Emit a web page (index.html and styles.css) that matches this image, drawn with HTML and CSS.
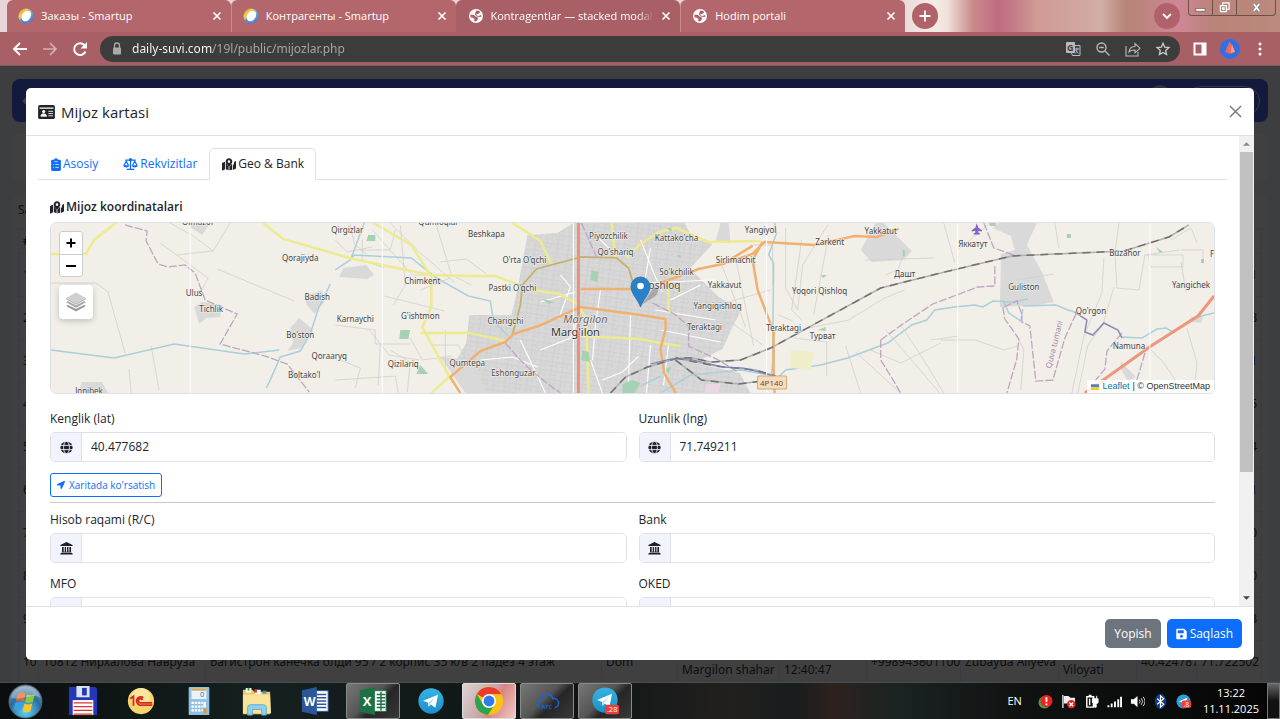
FILE: index.html
```html
<!DOCTYPE html>
<html lang="uz">
<head>
<meta charset="utf-8">
<title>Hodim portali</title>
<link rel="stylesheet" href="styles.css">
</head>
<body>
<svg class="defs" aria-hidden="true">
  <defs>
    <linearGradient id="ring" x1="0" y1="0" x2="1" y2="1"><stop offset="0" stop-color="#e8662c"/><stop offset=".3" stop-color="#f2d04a"/><stop offset=".55" stop-color="#5cb8d8"/><stop offset="1" stop-color="#5a4fc0"/></linearGradient>
    <radialGradient id="orb" cx=".5" cy=".8" r=".8"><stop offset="0" stop-color="#5fd6f5"/><stop offset=".6" stop-color="#2a6c9c"/><stop offset="1" stop-color="#8fa8b8"/></radialGradient>
    <linearGradient id="tg" x1="0" y1="0" x2="0" y2="1"><stop offset="0" stop-color="#37b4e4"/><stop offset="1" stop-color="#1b8fc9"/></linearGradient>
  </defs>
  <symbol id="smartup" viewBox="0 0 16 16"><circle cx="8" cy="8" r="7.6" fill="url(#ring)"/><path d="M2 12l3 3 4 .6-5-5z" fill="#3f7fe0"/><ellipse cx="8.3" cy="7.8" rx="4.2" ry="5.8" fill="#fff" transform="rotate(35 8 8)"/></symbol>
  <symbol id="world" viewBox="0 0 16 16"><circle cx="8" cy="8" r="7" fill="#fff"/><path d="M2.500 6.500l3.500.5 2 2h1.500l.5 2-2 2.500-2-.5.500-2-2-1.500H2.500zM8 2.500l3.500.5.500 1.500L10 6 8.500 6l0 1.500 2 .5 2.500-1 .5 1.500-1.500.5-3.500-.5-1.500-2z" fill="#a9606a"/></symbol>
  <symbol id="cross" viewBox="0 0 10 10"><path d="M1.500 1.500l7 7m0-7l-7 7" stroke="currentColor" stroke-width="1.700"/></symbol>
  <symbol id="globe" viewBox="0 0 16 16"><circle cx="8" cy="8" r="7.500" fill="#1c2126"/><g fill="none" stroke="#f1f4fd" stroke-width="1.100"><ellipse cx="8" cy="8" rx="3.600" ry="7.600"/><path d="M0 5.400h16M0 10.600h16"/></g></symbol>
  <symbol id="bank" viewBox="0 0 16 16"><path d="M8 0l7.500 3.600V5H.5V3.600zM2.500 6h2v6h1.300V6h1.700v6h1.200V6h1.700v6h1.200V6h2v6.200l1 .8H1.500l1-.8zM1 13.500h14l.8 2H.2z" fill="#1c2126"/></symbol>
  <symbol id="mapdot" viewBox="0 0 18 16"><path d="M0 6.200L4 4.600V14.200L0 16zM5 4.800c.4 2 2.400 4.600 3.500 6v4.700L5 14.200zM18 3.500v9.700L14 15V9.200c1-1.400 1.600-2.700 1.800-4.800zM9.500 15.500v-4.600c1.200-1.300 2-2.300 2.700-3.600l.8.7V14.800z" fill="currentColor"/><path fill-rule="evenodd" d="M9 0c2.500 0 4.300 1.900 4.300 4.200C13.300 6.200 10.500 9.600 9 11.300 7.500 9.600 4.700 6.200 4.700 4.200 4.700 1.900 6.500 0 9 0zm0 2.600a1.700 1.700 0 1 0 0 3.400 1.700 1.700 0 0 0 0-3.400z" fill="currentColor"/></symbol>
  <symbol id="clip" viewBox="0 0 12 16"><path fill="currentColor" d="M1.500 2H3.600a2.500 2.500 0 0 1 4.800 0H10.500c.8 0 1.500.7 1.500 1.500v11c0 .8-.7 1.500-1.500 1.500h-9C.7 16 0 15.300 0 14.500v-11C0 2.700.7 2 1.500 2z"/><path d="M4 4.500h4M2.500 8h1M5 8h4.500M2.500 11.500h1M5 11.500h4.500" stroke="#fff" stroke-width=".9"/></symbol>
  <symbol id="scale" viewBox="0 0 20 16"><g fill="none" stroke="currentColor" stroke-width="1.700"><path d="M3 2.800h14M10 1v13.800M5 15.100h10M1.200 10L4.300 4.300 7.400 10M12.600 10l3.100-5.700L18.800 10"/></g><circle cx="10" cy="2.200" r="2.200" fill="currentColor"/><path d="M.3 9.500h8c-.3 4-7.700 4-8 0zM11.700 9.500h8c-.3 4-7.700 4-8 0z" fill="currentColor"/></symbol>
  <symbol id="telegram" viewBox="0 0 28 28"><circle cx="14" cy="14" r="13.500" fill="url(#tg)"/><path d="M5.500 13.800L21.500 7.300 18.700 21.300 13.800 17.600 11.300 20 10.600 15.700z" fill="#fff"/><path d="M11 16l8-6.500-6 7.300-1.600 3z" fill="#b5d8ea"/></symbol>
</svg>

<header class="browser">
  <div class="tabstrip">
    <div class="tabs">
      <div class="tab"><svg class="fav"><use href="#smartup"/></svg><span>Заказы - Smartup</span><button aria-label="Close"><svg><use href="#cross"/></svg></button></div>
      <div class="tab"><svg class="fav"><use href="#smartup"/></svg><span>Контрагенты - Smartup</span><button aria-label="Close"><svg><use href="#cross"/></svg></button></div>
      <div class="tab current"><svg class="fav"><use href="#world"/></svg><span class="fade">Kontragentlar — stacked modal (</span><button aria-label="Close"><svg><use href="#cross"/></svg></button></div>
      <div class="tab"><svg class="fav"><use href="#world"/></svg><span>Hodim portali</span><button aria-label="Close"><svg><use href="#cross"/></svg></button></div>
    </div>
    <button class="round" aria-label="New tab"><svg viewBox="0 0 12 12"><path d="M6 0.500v11M.5 6h11" stroke="#fff" stroke-width="1.800"/></svg></button>
    <button class="round search" aria-label="Search tabs"><svg viewBox="0 0 12 12"><path d="M2 4l4 4 4-4" stroke="#fff" stroke-width="1.800" fill="none"/></svg></button>
    <div class="winctl">
      <button aria-label="Minimize"><svg viewBox="0 0 12 12"><rect x="1" y="7" width="10" height="3" fill="#fff" stroke="#555" stroke-width=".7"/></svg></button>
      <button aria-label="Restore"><svg viewBox="0 0 12 12"><path d="M4 3.500V1h7v7H8.500M1.500 4h6.500v6.500H1.500zM4 6.500h1.500v1.500H4z" fill="none" stroke="#fff" stroke-width="1.300"/></svg></button>
      <button class="wide" aria-label="Close window"><svg viewBox="0 0 12 12"><path d="M3 2l6 8m0-8l-6 8" stroke="#666" stroke-width="3.300"/><path d="M3 2l6 8m0-8l-6 8" stroke="#fff" stroke-width="2"/></svg></button>
    </div>
  </div>
  <div class="toolbar">
    <nav class="history">
      <button aria-label="Back"><svg viewBox="0 0 16 16"><path d="M15 8H2M8 2L2 8l6 6" fill="none" stroke="#fff" stroke-width="1.900"/></svg></button>
      <button class="dim" aria-label="Forward"><svg viewBox="0 0 16 16"><path d="M1 8h13M8 2l6 6-6 6" fill="none" stroke="#fff" stroke-width="1.700"/></svg></button>
      <button aria-label="Reload"><svg viewBox="0 0 16 16"><path d="M13.500 10.500A5.900 5.900 0 1 1 12.500 4.300" fill="none" stroke="#fff" stroke-width="2"/><path d="M15 1v6.500H8.500z" fill="#fff"/></svg></button>
    </nav>
    <div class="omnibox">
      <svg class="lock" viewBox="0 0 10 14"><path d="M2.500 6V3.500a2.500 2.500 0 0 1 5 0V6" fill="none" stroke="#aaa" stroke-width="1.300"/><rect x="1" y="5.500" width="8" height="7" rx="1" fill="#aaa"/></svg>
      <input type="text" aria-label="Address" value="daily-suvi.com/19l/public/mijozlar.php">
      <button aria-label="Translate"><svg viewBox="0 0 16 16"><rect x="1" y="1" width="9" height="11" rx="1" fill="#bbb"/><path d="M10 4.500h5v10H7.500L6.500 12" fill="none" stroke="#bbb"/><text x="2" y="10" font-size="9" font-weight="700" fill="#3c3c3c">G</text><path d="M9.500 8h5M12 6.500V8c0 2-1 3.500-2 4.500M10.500 9l3 3.500" stroke="#bbb" fill="none"/></svg></button>
      <button aria-label="Zoom"><svg viewBox="0 0 16 16"><circle cx="6.500" cy="6.500" r="4.500" fill="none" stroke="#bbb" stroke-width="1.400"/><path d="M10 10l4.500 4.500M4.300 6.500h4.500" stroke="#bbb" stroke-width="1.400"/></svg></button>
      <button aria-label="Share"><svg viewBox="0 0 16 16"><path d="M1 5v10h12v-4M4 11c.5-4 3-5.500 6-5.500V2.500l5 4.700-5 4.600V9c-2.500 0-4.500.3-6 2z" fill="none" stroke="#bbb" stroke-width="1.100"/></svg></button>
      <button aria-label="Bookmark"><svg viewBox="0 0 16 16"><path d="M8 2.300l1.700 3.900 4.200.4-3.200 2.800.9 4.100L8 11.400l-3.600 2.100.9-4.100-3.200-2.800 4.200-.4z" fill="none" stroke="#ccc" stroke-width="1.300"/></svg></button>
    </div>
    <button aria-label="Side panel"><svg viewBox="0 0 16 16"><path fill-rule="evenodd" d="M1.500 1.500h13v13h-13zM3.500 3.500v9H9.500v-9z" fill="#fff"/></svg></button>
    <button class="avatar" aria-label="Profile"><svg viewBox="0 0 20 20"><circle cx="10" cy="10" r="10" fill="#2f6fe8"/><path d="M9.500 2.500l3 4 2.500 6.500-4 2-6-2z" fill="#f0685c"/><path d="M12 6l3 7-4.500.5z" fill="#f9a08c"/></svg></button>
    <button aria-label="Menu"><svg viewBox="0 0 16 16" fill="#fff"><circle cx="8" cy="3" r="1.500"/><circle cx="8" cy="8" r="1.500"/><circle cx="8" cy="13" r="1.500"/></svg></button>
  </div>
</header>

<main class="viewport">
  <div class="behind">
    <div class="navbar"><svg viewBox="0 0 16 20"><path d="M12 3L5 10l7 7" fill="none" stroke="#3c404c" stroke-width="4"/></svg><div class="user"><b></b><i></i></div></div>
    <div class="filters"></div>
    <div class="list">
      <p>Sana</p>
      <table>
        <colgroup><col class="c1"><col class="c2"><col class="c3"><col class="c4"><col class="c5"><col class="c6"><col class="c7"><col class="c8"><col class="c9"><col class="c10"><col class="c11"></colgroup>
        <tr class="head"><th>#</th><th colspan="10"></th></tr>
        <tr><td>1</td><td colspan="10" class="end">1</td></tr>
        <tr><td>2</td><td colspan="10" class="end">8</td></tr>
        <tr><td>3</td><td colspan="10" class="end">1</td></tr>
        <tr><td>4</td><td colspan="10" class="end">5</td></tr>
        <tr><td>5</td><td colspan="10" class="end">4</td></tr>
        <tr><td>6</td><td colspan="10" class="end">1</td></tr>
        <tr><td>7</td><td colspan="10" class="end">0</td></tr>
        <tr><td>8</td><td colspan="10" class="end">0</td></tr>
        <tr><td>9</td><td colspan="10" class="end">3</td></tr>
        <tr><td>10</td><td>10812 Нирхалова Наврӯза</td><td>Багистрон канечка олди 95 / 2 корпис 35 к/в 2 падез 4 этаж</td><td>Dom</td><td><br>Margilon shahar</td><td><br>12:40:47</td><td>+998943801100</td><td>Zubayda Aliyeva</td><td><br>Viloyati</td><td>40.424787</td><td>71.722502</td></tr>
      </table>
    </div>
  </div>

  <section class="modal" role="dialog" aria-labelledby="title">
    <div class="modal-head">
      <svg class="idcard" viewBox="0 0 18 15"><rect width="18" height="15" rx="2" fill="#212529"/><path d="M1.500 3.300h15" stroke="#fff" stroke-width="1.300"/><circle cx="6" cy="7" r="1.700" fill="#fff"/><path d="M3 12c0-3.500 6-3.500 6 0zM11 6.800h5M11 9.200h5M11 11.600h5" fill="#fff" stroke="#fff" stroke-width=".9"/></svg>
      <h1 id="title">Mijoz kartasi</h1>
      <button class="close" aria-label="Close"><svg viewBox="0 0 14 14"><path d="M1 1l12 12M13 1L1 13" stroke="#7c7c7c" stroke-width="1.600"/></svg></button>
    </div>
    <div class="modal-body">
      <div class="content">
        <div class="nav" role="tablist">
          <button role="tab"><svg class="i-clip"><use href="#clip"/></svg>Asosiy</button>
          <button role="tab"><svg class="i-scale"><use href="#scale"/></svg>Rekvizitlar</button>
          <button role="tab" class="active" aria-selected="true"><svg class="i-map"><use href="#mapdot"/></svg>Geo &amp; Bank</button>
        </div>
        <div class="pane">
          <h2><svg class="i-map"><use href="#mapdot"/></svg>Mijoz koordinatalari</h2>
          <div class="map">
            <svg class="tiles" viewBox="51 223 1162 170" preserveAspectRatio="xMidYMid slice">
              <defs>
                <pattern id="streets" width="11" height="9" patternUnits="userSpaceOnUse" patternTransform="rotate(8)"><rect width="11" height="9" fill="#d9d8d8"/><path d="M0 2.500h11M3 0v9M7.500 2.500V9M0 6.500h7" stroke="#cecece" stroke-width=".7" fill="none"/></pattern>
              </defs>
              <rect x="51" y="223" width="1162" height="170" fill="#f2efe9"/>
              <path d="M527 235l30-2 16-10h111l8 15 20 6-23 25 9 8 20 20 23 12-10 20-9 20-28 14 45 10 12 22H487l-8-12-26-18 13-22 3-28h42l7-30z" fill="url(#streets)"/>
              <g fill="#dad9d9">
                <path d="M875 223h8l28 28-8 9-32 2-11-12zM1000 254l14-4-4-14-18-8 6-5 38 0-10 22 15 27 12 30-16 3-38 2 1-42zM194 307l8-5 20 3-2 12-14 1-7 6zM188 223h22l-8 12-12-8zM305 296l17-6 2 12-10 12-8-10zM290 328l9-10 14 12-12 18-14 3 6-8zM82 382h20l6 11H78zM343 268l23-3 8 10-7 4-28-2zM1120 362l15 15-8 4-8-14z"/>
                <path d="M440 357l35 3 10 33h-20zM1190 317l12 0-2 6-9-1zM720 223l8 0 2 20-15-2z"/>
              </g>
              <g fill="none" stroke="#d2cfcd" stroke-width=".8">
                <path d="M51 283h45l12 9 17 61M129 369l2 24M170 223l23 13 20 15-36 4M213 251l17-28M217 269l77 32M151 346l8 44M160 243l48 35-8 15M350 224l4 20 12 10M362 240v20l22 8M372 230l40 45 20 0M390 223l30 30 35 30M400 225l5 60-12 20M436 225l15 50 20 10M335 240l12 12 25-5M360 250h30l5-20M440 262l26-3 20 15M384 296l60 15M420 290l30-12M369 330l20 25 30 5M430 345l28 0 8 14M335 380l60-4 3 17M380 345l-2 40M390 350l20 12-3 30M410 338l12 22 30-4M445 330l0 40M335 325l40 5 0 14 35 0M340 360l20 8-5 20"/>
                <path d="M720 262l25 65M735 258l18 88M700 340l30-18 32 23M700 310l70-20M785 228v60l12 22 5-45 25-40M801 240l-10 70 10 10M828 235l-15 80M808 328l40-8 36-22 20-8M793 338l33 4 0 34M845 346l15 47M855 352l45 41M870 350l30 13 40-20M900 325l20 30 23 38M885 330l60 70M930 340l28-4M865 260l68-2M943 223l11 40M885 275l12-5 8-20M750 245h22v40M778 315l14 6"/>
                <path d="M957 250l30-25M1058 248l-4-25M1016 280l37-6M1103 258l-2 35-18 43-12 57M1118 223l-4 30 2 35 22 2 6-35 35-5M1180 250h22v12M1180 262l5 30M1020 390l3-40-8-16M940 340l35 0 28 10 14-4M1150 350l12 12 22 32M1186 328l10 35-3 30M1113 287l-11 38-15 20-10 48M1170 240l20-12 6 15M1147 255h35v12h-32z"/>
              </g>
              <g fill="none" stroke="#fff" stroke-width="1.100">
                <path d="M640 240l14 35 8 17M655 310l60 10M560 275l10 12-12 32M540 302l35-10M595 235l20 20M600 290l-5 35-3 35M630 315l-2 70M650 248l-6 35 70-3M540 350l30-12 10-25M480 360l32-3 25 10M590 360l12 33M650 345l-4 48M670 300l30-15M520 340l25 53M602 380l20-8 16-16M660 330l60 12M668 345l-5 40"/>
              </g>
              <g fill="none" stroke="#a9cfdb" stroke-width="1.500">
                <path d="M364 223l-12 32-2 5M335 270l15-10 4-5 57 3 25 20 32 18 22 5 3 20 15 15M330 284l-12 25-8 25-10 17-20 6-10 23-4 8M51 350l63 8 60-14 70 10 35-4M774 223l2 10-8 22 5 8-1 100-2 20M775 380l10-10 35-5 27-7 40-15 24-18 15-5 8-10 20-3 20-2 8 2 10-6 20 1 15-3M1022 306l33-1 12 5 10 3M1121 337l20 1 15-9 9-1 7 4 20-14 21-5M660 393l30-18 50-5 35 6M1002 300l6 13 12 8 2-12M640 386l20-10"/>
              </g>
              <g fill="none" stroke="#eceb8e" stroke-width="2.500">
                <path d="M51 254h35l8-14 23-18M263 223l20 16 70 20 77 16 40 1 25 0 37 14 27 4 18 10 9 15 2 75M373 223l38 22 20 32 0 30-9 20 30 55 M420 333h50l35 8M452 374l-21 19M512 223l28 18 12 25M611 223l4 34M638 246l-12 12M638 246l20-14 18-4 20 9 12 5 52-1M668 280v34M580 336l60 3 20 4 20 3"/>
              </g>
              <g fill="none" stroke="#c8b06e" stroke-width="1.800"><path d="M512 335l8-30 2-20 14-16 45-12 35 1 12 10 5 16"/></g>
              <g fill="none" stroke="#f0b070" stroke-width="2.500">
                <path d="M460 393l-10-16 30-26 25-9 8-8 25-8 42-19 60 8 25 4v10l-5 20 4 25 12 20M580 289h52M660 283l38-14 24-5 30-10 12-12 50 3 40-9 22 1 22-8M762 242l-10 18 5 30 16 42 0 40 1 22M722 264l30-18"/>
              </g>
              <path d="M578 223v170" stroke="#ef8f77" stroke-width="3"/>
              <path d="M1084 393l66-47 47-30 16-20" fill="none" stroke="#ef967f" stroke-width="3"/>
              <g fill="none" stroke="#bfa5c2" stroke-width="1.300" stroke-dasharray="8 2">
                <path d="M125 225l22 6-1 10 12 23 10 3 17-2 10 8 10 27 32 14-17 30 45 12 22 8 22 28M581 223l8 18 8 18M652 303l22 11 14 12 0 20 28 13 20 12M880 340l22-16 30-20 45-17 17-1 0-20M880 340v20l10 16 10 17M983 223l10 25 22 8M1002 307l2 12 14 20-2 20-10 34M1003 307l13-6 5 13 0 8 8 4 6 55 17-1 12-42 12-26M1121 333l-15 18-2 18-10 12-2 12M1144 353l-12 40M505 343l12 14 10 10 18 15 15 11"/>
              </g>
              <path d="M1074 312l12 8-2 12 8 3 11-12 14 7 4 8" fill="none" stroke="#8e88b5" stroke-width="1.500"/>
              <g fill="none" stroke="#b0b0b0" stroke-width="1.500">
                <path d="M610 393l15-16 22-10 30-9 15 0 18 4 30-2 30-12 110-60 60-15 71-17 112-5 45-14 20-12"/><path d="M675 360l26 20 37 4 30-4M675 358l40 8 40 4 20 6"/>
              </g>
              <g fill="none" stroke="#707070" stroke-width="1.500" stroke-dasharray="8 6">
                <path d="M610 393l15-16 22-10 30-9 15 0 18 4 30-2 30-12 110-60 60-15 71-17 112-5 45-14 20-12"/><path d="M675 360l26 20 37 4 30-4M675 358l40 8 40 4 20 6"/>
              </g>
              <path d="M650 364l20-5 18 0 35 8 20 1 30 8" stroke="#747fba" fill="none" stroke-width="1"/>
              <g fill="#a4d2b2"><path d="M368 235h7v6h-9zM400 330h10l-2 9h-9zM420 365l8 9h-12zM591 270l7 2-1 10-7-2zM582 350l6 2 2 10-9-2zM622 384l10-4 8 3-6 10h-12zM542 299l12 3-6 2zM665 369l6-3-3 8zM820 275h6l-3 3zM817 330l8-3v4zM988 223h7v3h-6zM1066 234h4v4h-4zM1155 247l7 5-3 1zM1200 259h3v4h-3zM676 255h4v4zM902 250h2v6h-2zM666 228h5v4z"/></g>
              <path d="M790 350l23 2-3 18-20-2z" fill="#eeefc8"/><path d="M706 384h14l-2 9h-14z" fill="#edd6e4"/>
              <path d="M190 223v170M382 223v170M573 223v170M766 223v170M957 223v170M1149 223v170" stroke="#fff" stroke-width="1"/>
              <path d="M976 225l1 3 4 3-4-1v3l2 1h-6l2-1v-3l-4 1 4-3z" fill="#8461c4" stroke="#8461c4"/>
              <g class="place">
                <text x="198" y="225">Olmazor</text><text x="347" y="233">Qirgizlar</text><text x="300" y="261">Qorajiyda</text><text x="194" y="296">Ulus</text><text x="211" y="312">Tichlik</text><text x="317" y="300">Badish</text><text x="300" y="338">Bo'ston</text><text x="329" y="359">Qoraaryq</text><text x="304" y="378">Boltako'l</text><text x="89" y="394">Jonibek</text>
                <text x="438" y="225">Qumloqlar</text><text x="486" y="237">Beshkapa</text><text x="422" y="284">Chimkent</text><text x="355" y="322">Karnaychi</text><text x="420" y="319">G'ishtmon</text><text x="403" y="367">Qizilariq</text><text x="467" y="366">Qumtepa</text><text x="524" y="263">O'rta O'qchi</text><text x="512" y="291">Pastki O'qchi</text><text x="505" y="324">Charigchi</text><text x="513" y="376">Eshonguzar</text>
                <text x="608" y="239">Piyozchilik</text><text x="615" y="255">Qo'shariq</text><text x="676" y="241">Kattako'cha</text><text x="760" y="233">Yangiyol</text><text x="735" y="263">Sirlimachit</text><text x="676" y="275">So'kchilik</text><text x="724" y="288">Yakkavut</text><text x="717" y="309">Yangiqishloq</text><text x="704" y="330">Teraktagi</text><text x="783" y="331">Teraktagi</text><text x="829" y="245">Zarkent</text><text x="880" y="234">Yakkatut</text><text x="904" y="277">Дашт</text><text x="819" y="294">Yoqori Qishloq</text><text x="822" y="339">Турват</text>
                <text x="972" y="247">Яккатут</text><text x="1023" y="290">Guliston</text><text x="1124" y="256">Buzahor</text><text x="1190" y="288">Yangichek</text><text x="1090" y="314">Qo'rgon</text><text x="1128" y="349">Namuna</text><text x="1211" y="257">F</text>
                <text x="575" y="336" class="city">Marg'ilon</text><text x="585" y="323" class="city soft">Margilon</text><text x="664" y="289" class="town">oshloq</text>
                <text class="border" x="1056" y="345" transform="rotate(-76 1056 345)">Quva tumani</text>
              </g>
              <rect x="757" y="376" width="29" height="13" rx="1" fill="#f8dcba" stroke="#c9a981"/><text class="shield" x="771" y="386">4P140</text>
              <path d="M641 305l12-17c6-2 6 3 2 8z" fill="#555" opacity=".35"/>
              <path d="M640 307c-2-7-9.500-13-9.500-20.500a9.500 9.500 0 0 1 19 0C649.500 294 642 300 640 307z" fill="#2a81cb" stroke="#2e6fa6" stroke-width=".8"/><circle cx="640" cy="286" r="3.300" fill="#fff"/>
            </svg>
            <div class="zoomctl"><button aria-label="Zoom in"><svg viewBox="0 0 12 12"><path d="M6 1.500v9M1.500 6h9" stroke="#000" stroke-width="2"/></svg></button><button aria-label="Zoom out"><svg viewBox="0 0 12 12"><path d="M1 6h10" stroke="#000" stroke-width="2"/></svg></button></div>
            <button class="layers" aria-label="Layers"><svg viewBox="0 0 20 20"><path d="M0 14l2-1 8 4 8-4 2 1-10 5.500z" fill="#999"/><path d="M0 10.200l2-1 8 4 8-4 2 1-10 5.500z" fill="#aaa"/><path d="M10 .5l10 5.500-10 5.500L0 6z" fill="#d0d0d0"/><path d="M0 6l10 5.500L20 6v1.200L10 12.700 0 7.200z" fill="#b5b5b5"/></svg></button>
            <div class="attrib"><svg viewBox="0 0 12 8"><path fill="#4c7be1" d="M0 0h12v4H0z"/><path fill="#ffd500" d="M0 4h12v3H0z"/><path fill="#e0bc00" d="M0 7h12v1H0z"/></svg><a href="#leaflet">Leaflet</a> | © OpenStreetMap</div>
          </div>
          <div class="grid coords">
            <div class="field"><label for="lat">Kenglik (lat)</label><div class="group"><span><svg><use href="#globe"/></svg></span><input id="lat" type="text" value="40.477682"></div></div>
            <div class="field"><label for="lng">Uzunlik (lng)</label><div class="group"><span><svg><use href="#globe"/></svg></span><input id="lng" type="text" value="71.749211"></div></div>
          </div>
          <button class="show"><svg viewBox="0 0 512 512"><path fill="currentColor" d="M444.520 3.520L28.740 195.420c-47.970 22.390-31.980 92.750 19.190 92.750h175.910v175.910c0 51.170 70.360 67.170 92.750 19.190l191.900-415.780c15.990-38.390-25.590-79.970-63.970-63.970z"/></svg>Xaritada ko'rsatish</button>
          <hr>
          <div class="grid">
            <div class="field"><label for="acc">Hisob raqami (R/C)</label><div class="group"><span><svg><use href="#bank"/></svg></span><input id="acc" type="text"></div></div>
            <div class="field"><label for="bankname">Bank</label><div class="group"><span><svg><use href="#bank"/></svg></span><input id="bankname" type="text"></div></div>
            <div class="field"><label for="mfo">MFO</label><div class="group"><span></span><input id="mfo" type="text"></div></div>
            <div class="field"><label for="oked">OKED</label><div class="group"><span></span><input id="oked" type="text"></div></div>
          </div>
        </div>
      </div>
      <div class="scrollbar" aria-hidden="true"><svg viewBox="0 0 8 4"><path d="M0 4l4-4 4 4z" fill="#888"/></svg><div class="track"><div class="thumb"></div></div><svg viewBox="0 0 8 4"><path d="M0 0l4 4 4-4z" fill="#444"/></svg></div>
    </div>
    <div class="modal-foot">
      <button class="btn grey">Yopish</button>
      <button class="btn blue"><svg viewBox="0 0 448 512"><path fill="currentColor" d="M433.941 129.941l-83.882-83.882A48 48 0 0 0 316.118 32H48C21.490 32 0 53.490 0 80v352c0 26.510 21.490 48 48 48h352c26.510 0 48-21.490 48-48V163.882a48 48 0 0 0-14.059-33.941zM224 416c-35.346 0-64-28.654-64-64 0-35.346 28.654-64 64-64s64 28.654 64 64c0 35.346-28.654 64-64 64zm96-304.520V212c0 6.627-5.373 12-12 12H76c-6.627 0-12-5.373-12-12V108c0-6.627 5.373-12 12-12h228.520c3.183 0 6.235 1.264 8.485 3.515l3.480 3.480A11.996 11.996 0 0 1 320 111.480z"/></svg>Saqlash</button>
    </div>
  </section>
</main>

<footer class="taskbar">
  <button class="start" aria-label="Start"><svg viewBox="0 0 36 36"><circle cx="18" cy="18" r="17" fill="url(#orb)" stroke="#54616a"/><path d="M10 10c3-2 5-1.500 8 0l-2 8c-3-1.500-5-1.500-8 0z" fill="#e8622c"/><path d="M19.500 10.500c3 1.500 5 1.500 8 0l-2 8c-3 1.500-5 1.500-8 0z" fill="#8cc63e"/><path d="M7.500 19.500c3-1.500 5-1.500 8 0l-2 7.500c-3-1.500-5-1.500-8 0z" fill="#3aa0e0"/><path d="M17 20c3 1.500 5 1.500 8 0l-2 8c-3 1.500-5 1.500-8 0z" fill="#fbc52c"/><path d="M3 14A15.500 15.500 0 0 1 33 14C24 9 12 18 3 14z" fill="#fff" opacity=".3"/></svg></button>
  <button aria-label="Total Commander"><svg viewBox="0 0 32 32"><path d="M1 1h28l2 2v28H1z" fill="#2437b8"/><rect x="9" y="0" width="14" height="12" fill="#dfe3ea"/><rect x="15" y="2" width="5" height="8" fill="#2437b8"/><path d="M5 15h22v16H5z" fill="#fff"/><path d="M6 18h20M6 22h20M6 26h20M6 30h20" stroke="#d33" stroke-width="1.500"/></svg></button>
  <button aria-label="1C"><svg viewBox="0 0 32 32"><circle cx="16" cy="16" r="14" fill="#f7d56a"/><circle cx="16" cy="12" r="10" fill="#fbe79c"/><path d="M4.500 13.500l3.500-2.500v10M18.500 12.500a4.500 4.500 0 1 0-2 8H28M17.500 15a2.200 2.200 0 1 0-2 3H28" fill="none" stroke="#d8261c" stroke-width="1.900"/></svg></button>
  <button aria-label="Calculator"><svg viewBox="0 0 32 32"><rect x="5" y="1" width="22" height="30" rx="1" fill="#8fc0e4"/><rect x="8" y="3" width="16" height="11" fill="#e8f4fb"/><path d="M8 4h16" stroke="#f0a040" stroke-width="2"/><text x="17" y="12" font-size="8" fill="#3573a8">0</text><path d="M8 18h12M8 22h12M8 26h12" stroke="#fff" stroke-width="2.500" stroke-dasharray="2.500 1"/><path d="M22 17v6" stroke="#fff" stroke-width="2.500"/><path d="M22.500 24v5" stroke="#f09020" stroke-width="3"/></svg></button>
  <button aria-label="Explorer"><svg viewBox="0 0 32 32"><path d="M1 4h10l2 2h17v24H1z" fill="#e8c765"/><path d="M4 2h6v5H4zM14 4h6v5h-6z" fill="#fff"/><path d="M6 2h2v3H6z" fill="#3a3"/><path d="M13 4h3v3h-3z" fill="#d33"/><path d="M22 5h4v3h-4z" fill="#48c"/><path d="M1 9h29l1 20H1z" fill="#f8e39a"/><path d="M6 31v-8q0-3 3-3h14q3 0 3 3v8h-5v-6H11v6z" fill="#8fd0ec" stroke="#63a9cd"/></svg></button>
  <button aria-label="Word"><svg viewBox="0 0 32 32"><rect x="14" y="5" width="16" height="22" fill="#fff" stroke="#2b579a"/><path d="M18 9h10M18 12.500h10M18 16h10M18 19.500h10M18 23h10" stroke="#2b579a" stroke-width="1.500"/><path d="M2 4.500L18 1v30L2 27.500z" fill="#2b579a"/><text x="4" y="21" font-size="13" font-weight="700" fill="#fff">W</text></svg></button>
  <button class="open" aria-label="Excel"><svg viewBox="0 0 32 32"><rect x="14" y="5" width="16" height="22" fill="#fff" stroke="#1e7145"/><path d="M20 9h9M20 12.500h9M20 16h9M20 19.500h9M20 23h9M24.500 6v20" stroke="#1e7145" stroke-width="1.500"/><path d="M2 4.500L18 1v30L2 27.500z" fill="#1e7145"/><text x="5" y="21" font-size="14" font-weight="700" fill="#fff">X</text></svg></button>
  <button aria-label="Telegram"><svg viewBox="0 0 32 32"><use href="#telegram" x="2" y="2" width="28" height="28"/></svg></button>
  <button class="open front" aria-label="Chrome"><svg viewBox="0 0 32 32"><circle cx="16" cy="16" r="15" fill="#fbc116"/><path d="M16 16L3 8.500A15 15 0 0 1 29 8.500H16z" fill="#ea3a2b"/><path d="M3 8.500A15 15 0 0 0 15 31L22 19.500 16 16 9.500 19.500z" fill="#2da350"/><circle cx="16" cy="16" r="7.500" fill="#fff"/><circle cx="16" cy="16" r="5.800" fill="#2f7de9"/></svg></button>
  <button class="open" aria-label="ATC"><svg viewBox="0 0 32 32"><path d="M9 23a4.500 4.500 0 0 1 0-8.500 7 7 0 0 1 13.500-1 4.800 4.800 0 0 1 2 9.500" fill="none" stroke="#1864d8" stroke-width="1.700"/><text x="10" y="25" font-size="6" font-weight="700" fill="#1864d8">ATC</text></svg></button>
  <button class="open" aria-label="Telegram, 28"><svg viewBox="0 0 32 32"><use href="#telegram" x="2" y="1" width="28" height="28"/><rect x="16" y="20" width="15" height="10" rx="2" fill="#ee3b3b"/><text x="18" y="28" font-size="8" fill="#fff">.28</text></svg></button>
  <div class="tray">
    <span class="lang">EN</span>
    <svg viewBox="0 0 16 16"><circle cx="7" cy="9" r="6.500" fill="#37a646"/><circle cx="9" cy="7.500" r="6.500" fill="#e22"/><path d="M9 3.500v5M9 10v2" stroke="#fff" stroke-width="2"/></svg>
    <svg viewBox="0 0 16 16"><path d="M2 1v14" stroke="#ddd" stroke-width="1.500"/><path d="M3 2h5l2 2h5v6H3z" fill="#eee"/><circle cx="11" cy="11" r="4.500" fill="#d22"/><path d="M9 9l4 4m0-4l-4 4" stroke="#fff" stroke-width="1.500"/></svg>
    <svg viewBox="0 0 16 16"><path d="M3 3h7v11H3zM5 1.500h3M6 5v7" fill="none" stroke="#fff" stroke-width="1.500"/><path d="M9 5h6v4l-2 2v3h-2v-3L9 9zM10.500 2v3M13.500 2v3" fill="#fff" stroke="#fff"/></svg>
    <svg viewBox="0 0 16 16"><path d="M1.500 14v-2M5 14v-4M8.500 14V8M12 14V5.500M15 14V3" stroke="#fff" stroke-width="2"/></svg>
    <svg viewBox="0 0 16 16"><path d="M1 5.500h3L8 2v12l-4-3.500H1z" fill="#fff"/><path d="M10 6q1.500 2 0 4M12 4.500q3 3.500 0 7M14 3q4 5 0 10" stroke="#ddd" fill="none"/></svg>
    <svg viewBox="0 0 16 16"><ellipse cx="8" cy="8" rx="6" ry="8" fill="#0a3d8c"/><path d="M4.500 5l7 6L8 14V2l3.500 3-7 6" fill="none" stroke="#fff" stroke-width="1.300"/></svg>
    <svg viewBox="0 0 16 16"><circle cx="8" cy="8" r="7.500" fill="#2c9fd8"/><path d="M3 8l9-4-2 6z" fill="#fff"/><rect x="6" y="7" width="10" height="8" rx="2" fill="#ee3b3b"/><text x="8" y="14" font-size="7" fill="#fff">.8</text></svg>
    <time>13:22<br>11.11.2025</time>
  </div>
  <button class="desk" aria-label="Show desktop"></button>
</footer>
</body>
</html>
```

FILE: styles.css
```css
* { box-sizing: border-box; }
body {
  margin: 0;
  height: 100vh;
  display: flex;
  flex-direction: column;
  overflow: hidden;
  font: 12px/16px "Open Sans", "Noto Sans", sans-serif;
  color: #212529;
}
button {
  display: flex;
  align-items: center;
  justify-content: center;
  padding: 0;
  border: 0;
  background: none;
  font: inherit;
  color: inherit;
}
input { font: inherit; min-width: 0; }
svg { display: block; flex: none; }
.defs { position: absolute; width: 0; height: 0; }

/* browser frame */
.tabstrip {
  display: flex;
  align-items: flex-start;
  height: 32px;
  padding: 0 4px 0 7px;
  background: linear-gradient(90deg, #e8d5d8 0, #e8d5d8 70%, #f4ece6 73%, #f0e2da 74%, #c98b8c 76%, #bf6a80 78%, #cf9a95 81%, #d2aea6 86%, #b58476 88%, #cf8796 92%, #b98378 95%, #bc8a7e 100%);
}
.tabs { display: flex; flex: 0 1 898px; min-width: 0; }
.tab {
  display: flex;
  align-items: center;
  flex: 1 1 0;
  min-width: 0;
  height: 32px;
  padding: 0 9px 0 11px;
  gap: 7px;
  border-radius: 6px 6px 0 0;
  background: #b3666b;
  color: #fff;
  font-size: 11px;
}
.tab + .tab { border-left: 1px solid #c98c8f; }
.tab.current { background: #a95f66; border-color: #a95f66; }
.tab span { flex: 1; overflow: hidden; white-space: nowrap; }
.tab .fade { mask-image: linear-gradient(90deg, #000 90%, transparent); }
.tab button svg { width: 10px; height: 10px; }
.fav { width: 16px; height: 16px; }
.round { width: 26px; height: 26px; margin: 3px 0 0 7px; border-radius: 50%; background: #b0626a; flex: none; }
.round svg { width: 12px; height: 12px; }
.round.search { margin-left: auto; }
.winctl { display: flex; margin-left: 8px; height: 16px; border: 1px solid #6f5048; border-top: 0; border-radius: 0 0 4px 4px; }
.winctl button { width: 24px; border-right: 1px solid #6f5048; }
.winctl .wide { width: 38px; border: 0; }
.winctl svg { width: 11px; height: 11px; }
.toolbar {
  display: flex;
  align-items: center;
  height: 34px;
  padding: 0 12px;
  gap: 12px;
  background: #a95f66;
  border-bottom: 1px solid #7c5a5c;
}
.history { display: flex; gap: 14px; }
.toolbar svg { width: 16px; height: 16px; }
.toolbar .dim { opacity: .5; }
.toolbar .avatar svg { width: 20px; height: 20px; }
.omnibox {
  display: flex;
  align-items: center;
  flex: 1;
  height: 26px;
  gap: 14px;
  padding: 0 9px 0 12px;
  border-radius: 13px;
  background: #3c3c3c;
}
.omnibox .lock { width: 10px; height: 14px; }
.omnibox input {
  flex: 1;
  margin-left: -4px;
  padding: 0;
  border: 0;
  color: transparent;
  background: linear-gradient(90deg, #fff 81px, #a9a9a9 81px);
  background-clip: text;
  font-family: "Noto Sans", sans-serif;
}

/* dimmed page */
.viewport { position: relative; flex: 1; min-height: 0; overflow: hidden; background: #3c3e40; }
.behind { padding: 13px 12px 0; color: #0d0e10; font-family: "Noto Sans", sans-serif; }
.navbar { display: flex; align-items: center; justify-content: space-between; height: 43px; padding: 0 8px; border-radius: 8px; background: #141a3c; }
.navbar svg { width: 16px; height: 20px; }
.user { display: flex; align-items: center; gap: 14px; }
.user b { width: 24px; height: 32px; border-radius: 12px; background: #34323c; }
.user i { width: 74px; height: 30px; border: 1px solid #34384c; border-radius: 15px; }
.filters { height: 48px; margin-top: 11px; border-radius: 6px; background: #404040; }
.list { margin-top: 15px; padding: 6px 6px 0; border-radius: 6px; background: #404040; }
.list p { margin: 0 0 10px; }
.list table { width: 100%; table-layout: fixed; border-collapse: collapse; }
.list tr { height: 43px; }
.list .head { height: 25px; }
.list td, .list th { padding: 0 4px; text-align: left; border: 1px solid #393c42; white-space: nowrap; overflow: hidden; }
.list .end { text-align: right; }
.c1 { width: 20px; } .c2 { width: 167px; } .c3 { width: auto; } .c4 { width: 76px; }
.c5 { width: 102px; } .c6 { width: 87px; } .c7 { width: 94px; } .c8 { width: 98px; }
.c9 { width: 78px; } .c10 { width: 60px; } .c11 { width: 65px; }

/* dialog */
.modal {
  position: absolute;
  inset: 22px 26px 22px 26px;
  display: flex;
  flex-direction: column;
  border-radius: 5px;
  background: #fff;
  overflow: hidden;
}
.modal-head { display: flex; align-items: center; gap: 6px; height: 48px; flex: none; padding: 0 12px; border-bottom: 1px solid #dee2e6; }
.modal-head h1 { flex: 1; margin: 0; font-size: 15px; line-height: 20px; font-weight: 400; }
.idcard { width: 17px; height: 14px; }
.close svg { width: 13px; height: 13px; }
.modal-body { display: flex; flex: 1; min-height: 0; }
.content { flex: 1; min-width: 0; padding: 12px; overflow: hidden; }
.nav { display: flex; border-bottom: 1px solid #dee2e6; }
.nav button { gap: 2px; height: 32px; margin-bottom: -1px; padding: 0 11px 0 12px; border: 1px solid transparent; border-radius: 5px 5px 0 0; color: #0d6efd; }
.nav .active { border-color: #dee2e6; border-bottom-color: #fff; background: #fff; color: #212529; }
.i-clip { width: 10px; height: 13px; }
.i-scale { width: 15px; height: 12px; }
.i-map { width: 14px; height: 13px; }
.pane { padding: 18px 12px 0; }
.pane h2 { display: flex; align-items: center; gap: 2px; margin: 0 0 6px; font-size: 12px; line-height: 18px; font-weight: 600; }
.map { position: relative; height: 172px; border: 1px solid #dee2e6; border-radius: 6px; overflow: hidden; }
.tiles { width: 100%; height: 100%; }
.place { font-family: "Noto Sans", sans-serif; font-size: 8px; fill: #444; text-anchor: middle; paint-order: stroke; stroke: #f5f3ee; stroke-width: 1px; }
.place .city { font-size: 11px; fill: #333; }
.place .town { font-size: 10px; }
.place .soft { fill: #666; font-style: italic; }
.place .border { fill: #a283aa; }
.shield { font-size: 8px; fill: #5d4a35; text-anchor: middle; }
.zoomctl { position: absolute; left: 8px; top: 8px; width: 24px; border: 1px solid #ccc; border-radius: 3px; background: #fff; }
.zoomctl button { width: 22px; height: 22px; }
.zoomctl button + button { border-top: 1px solid #ccc; height: 22px; }
.zoomctl svg { width: 12px; height: 12px; }
.layers { position: absolute; left: 8px; top: 62px; width: 34px; height: 34px; border-radius: 4px; background: #fff; box-shadow: 0 2px 6px rgba(0, 0, 0, .2); }
.layers svg { width: 20px; height: 20px; }
.attrib { position: absolute; right: 0; bottom: 0; display: flex; align-items: center; gap: 3px; padding: 0 4px; background: rgba(255, 255, 255, .85); font: 9px/13px "Liberation Sans", sans-serif; color: #333; }
.attrib svg { width: 8px; height: 6px; }
.attrib a { color: #0078a8; text-decoration: none; }
.grid { display: grid; grid-template-columns: 1fr 1fr; gap: 12px; }
.coords { margin-top: 16px; }
.field label { display: block; line-height: 18px; margin-bottom: 4px; }
.group { display: flex; height: 30px; border: 1px solid #dee2e6; border-radius: 5px; overflow: hidden; }
.group span { display: flex; align-items: center; justify-content: center; width: 31px; border-right: 1px solid #dee2e6; background: #f1f4fd; }
.group svg { width: 13px; height: 13px; }
.group input { flex: 1; padding: 0 9px; border: 0; color: #212529; }
.show { gap: 4px; height: 24px; margin-top: 11px; padding: 0 6px; border: 1px solid #0d6efd; border-radius: 3px; color: #0d6efd; font-size: 10px; }
.show svg { width: 8px; height: 8px; }
.pane hr { margin: 5px 0 8px; border: 0; border-top: 1px solid #c7c8ca; }
.scrollbar { display: flex; flex-direction: column; align-items: center; width: 15px; padding: 6px 1px; gap: 6px; background: #f1f1f1; }
.scrollbar svg { width: 7px; height: 4px; }
.track { flex: 1; align-self: stretch; }
.thumb { height: 73%; background: #c1c1c1; }
.modal-foot { display: flex; align-items: center; justify-content: flex-end; gap: 6px; height: 54px; flex: none; padding: 0 12px; border-top: 1px solid #dee2e6; }
.btn { height: 29px; padding: 0 9px; gap: 3px; border-radius: 5px; color: #fff; }
.btn svg { width: 11px; height: 12px; }
.grey { background: #6c757d; }
.blue { background: #0d6efd; }

/* taskbar */
.taskbar {
  display: flex;
  align-items: stretch;
  gap: 4px;
  height: 37px;
  flex: none;
  border-top: 1px solid #4b4e50;
  background: linear-gradient(90deg, #0b0d0e, #14201f 20%, #101415 45%, #22201f 57%, #181d1d 62%, #2d211f 65%, #1a2422 70%, #101111 80%, #050505);
}
.taskbar button { width: 54px; flex: none; }
.taskbar button svg { width: 30px; height: 30px; }
.taskbar .start { width: 50px; margin-right: 2px; }
.taskbar .start svg { width: 35px; height: 35px; }
.taskbar .open { border: 1px solid #8a8a8a; border-radius: 2px; background: linear-gradient(135deg, #777 0, #555 45%, #262626 60%, #383838); }
.taskbar .front { border-color: #ddd; background: linear-gradient(120deg, #ddd5d5, #c9a3a3 50%, #d88482 60%, #f0c9c6); }
.tray { display: flex; align-items: center; gap: 8px; margin-left: auto; color: #fff; font-size: 11px; }
.tray svg { width: 15px; height: 15px; }
.lang { margin-right: 8px; }
.tray time { margin-left: 4px; text-align: center; white-space: nowrap; }
.taskbar .desk { width: 13px; margin-left: 4px; border: 1px solid #777; background: linear-gradient(#666, #111 50%); }
```
